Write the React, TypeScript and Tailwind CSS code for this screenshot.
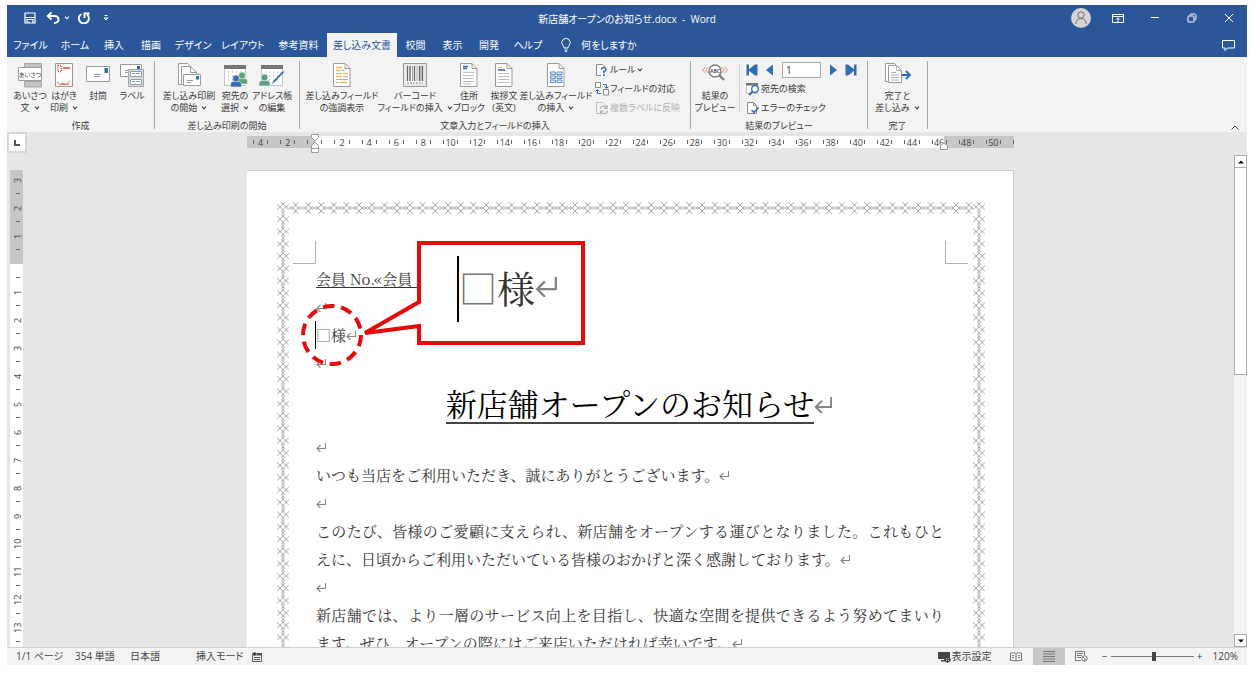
import type { ReactNode } from 'react';

const TABS = [
    { label: 'ファイル', width: 'w-[47px]' },
    { label: 'ホーム', width: 'w-[42px]' },
    { label: '挿入', width: 'w-[36px]' },
    { label: '描画', width: 'w-[38px]' },
    { label: 'デザイン', width: 'w-[46px]' },
    { label: 'レイアウト', width: 'w-[54px]' },
    { label: '参考資料', width: 'w-[57px]' },
    { label: '差し込み文書', width: 'w-[70px]', active: true },
    { label: '校閲', width: 'w-[37px]' },
    { label: '表示', width: 'w-[37px]' },
    { label: '開発', width: 'w-[36px]' },
    { label: 'ヘルプ', width: 'w-[42px]' },
];

const RULER = [4, 2, 0, ...Array.from({ length: 25 }, (_, i) => (i + 1) * 2)];
const SIDE_RULER = [3, 2, 1, 0, ...Array.from({ length: 13 }, (_, i) => i + 1)];

/* ---------- small glyphs ---------- */

function Caret() {
    return (
        <svg viewBox="0 0 6 4" className="inline-block h-1 w-1.5 shrink-0" aria-hidden="true">
            <path d="M1 .6 3 2.8 5 .6" fill="none" stroke="currentColor" strokeWidth="1.1" />
        </svg>
    );
}

function ReturnMark({ className = 'w-[10px]' }: { className?: string }) {
    return (
        <svg viewBox="0 0 20 18" className={`inline-block shrink-0 align-[1px] ${className}`} aria-hidden="true">
            <path
                d="M19 0v11H2M9 4 2 11l7 7"
                fill="none"
                stroke="#858585"
                strokeWidth="2.200"
            />
        </svg>
    );
}

/* ---------- ribbon icons ---------- */

function Icon({ children }: { children: ReactNode }) {
    return (
        <svg viewBox="0 0 26 25" className="h-[25px] w-[26px] shrink-0" fill="none" aria-hidden="true">
            {children}
        </svg>
    );
}

function Sheet({ x = 4.5 }: { x?: number }) {
    return (
        <g transform={`translate(${x} .5)`} stroke="#9a9a9a">
            <path d="M0 0h11.500l5 5v18H0z" fill="#fff" />
            <path d="M11.500 0v5h5" />
        </g>
    );
}

function Person({ x, y, color }: { x: number; y: number; color: string }) {
    return (
        <g transform={`translate(${x} ${y})`} fill={color} stroke="#f3f3f3" strokeWidth=".6">
            <path d="M0 12V9.500Q0 6.500 3 6.500h5q3 0 3 3V12z" />
            <circle cx="5.500" cy="3.500" r="3.400" />
        </g>
    );
}

function Grid() {
    return (
        <>
            <path d="M2.500 2.500h21v20h-21z" fill="#fff" stroke="#c4c4c4" />
            <path d="M2 2h22v4H2z" fill="#767676" />
            <path d="M6 9h16M6 13h16M6 17h16" stroke="#9a9a9a" strokeDasharray="1 3" />
        </>
    );
}

const icons = {
    greeting: (
        <Icon>
            <path d="M7.500.5h17v4h-17zM7.500 18.500h17v5.500h-17z" fill="#c4c4c4" stroke="#a6a6a6" />
            <path d="M1.500 4.500h23v13h-23z" fill="#fff" stroke="#9a9a9a" />
            <text x="13" y="13.500" textAnchor="middle" fontSize="6" fill="#444">
                あいさつ
            </text>
        </Icon>
    ),
    postcard: (
        <Icon>
            <path d="M4.500.5h17v23h-17z" fill="#fff" stroke="#9a9a9a" />
            <path d="M7 2.500h3.500v6H7z" stroke="#d9523f" strokeWidth="1.500" strokeDasharray="1 1" />
            <path d="M12 5h7" stroke="#d9523f" strokeWidth="1.600" />
            <path d="M6 18.500q1 3 2.500 1.500M10 20.500h4M15 20.500q2 0 4.500-2.500M8 21.500h10" stroke="#e27a6b" />
        </Icon>
    ),
    envelope: (
        <Icon>
            <path d="M1.500 3.500h23v15h-23z" fill="#fff" stroke="#9a9a9a" />
            <path d="M19.500 5H23v5h-3.500z" fill="#2f6db5" />
            <path d="M9 11.500h7M9 13.500h6" stroke="#9a9a9a" />
        </Icon>
    ),
    labels: (
        <Icon>
            <path d="M1.500 1.500h21v12h-21z" fill="#fff" stroke="#9a9a9a" />
            <path d="M18 3h3v3h-3z" fill="#2f6db5" />
            <path d="M6 7.500h4M6 9.500h3" stroke="#9a9a9a" />
            <path d="M9.500 6.500h15v17h-15z" fill="#dcdcdc" stroke="#a6a6a6" />
            <path d="M11.500 8.500h11v5h-11zM11.500 16.500h11v5h-11z" fill="#fff" stroke="#9a9a9a" />
            <path d="M13 10.500h3m1 0h4M13 18.500h3m1 0h4" stroke="#6f9dd0" />
        </Icon>
    ),
    startMerge: (
        <Icon>
            <path d="M2.500.5h9l5 5v16h-14z" fill="#fff" stroke="#9a9a9a" />
            <path d="M5.500 3.500h9l6 6v12h-15z" fill="#fff" stroke="#9a9a9a" />
            <path d="M14.500 3.500v6h6" stroke="#9a9a9a" />
            <path d="M7.500 11.500h17v11h-17z" fill="#fff" stroke="#9a9a9a" />
            <path d="M20 13h3v3.500h-3z" fill="#2f6db5" />
            <path d="M11 17.500h6M11 19.500h4" stroke="#9a9a9a" />
        </Icon>
    ),
    recipients: (
        <Icon>
            <Grid />
            <Person x={14.5} y={9} color="#5f9e7e" />
            <Person x={8.5} y={12} color="#2f6db5" />
        </Icon>
    ),
    editList: (
        <Icon>
            <Grid />
            <Person x={0} y={11} color="#5f9e7e" />
            <path d="m13 21.500 1-3.500 9-9.500q1.500-1 2.500.5L16 19z" fill="#2f6db5" stroke="#f3f3f3" strokeWidth=".5" />
        </Icon>
    ),
    highlight: (
        <Icon>
            <Sheet />
            <path d="M7 4.500h6M7 7.500h4M14 10.500h5M7 13.500h6M11 19.500h7" stroke="#eebf49" strokeWidth="1.400" />
            <path d="M12 7.500h3M7 10.500h6M14 13.500h5M7 16.500h12M7 19.500h3" stroke="#b0b0b0" />
        </Icon>
    ),
    barcode: (
        <Icon>
            <path d="M1.500.5h23v23h-23z" fill="#e9e9e9" stroke="#9a9a9a" />
            <path d="M4 3h18v18H4z" fill="#fff" />
            <path
                d="M5.500 3v15M8 3v15M12.500 3v15M17.500 3v15M20.500 3v15"
                stroke="#666"
                strokeWidth="1.400"
            />
            <path d="M10.500 3v15M15 3v15M19 3v15" stroke="#888" strokeWidth=".8" />
            <path d="M5 20h16" stroke="#777" strokeDasharray="2 1" />
        </Icon>
    ),
    address: (
        <Icon>
            <Sheet />
            <path d="M7 3.500h5M7 5.500h4" stroke="#2f6db5" strokeWidth="1.300" />
            <path d="M7 9.500h11M7 12.500h11M7 15.500h11M7 18.500h11M7 21h8" stroke="#bdbdbd" />
        </Icon>
    ),
    greetingLine: (
        <Icon>
            <Sheet />
            <path d="M7 7h7" stroke="#2f6db5" strokeWidth="1.600" />
            <path d="M7 4.500h4M7 10.500h11M7 13.500h11M7 16.500h11M7 19.500h11" stroke="#bdbdbd" />
        </Icon>
    ),
    insertField: (
        <Icon>
            <Sheet />
            <path
                d="M7.500 9h5v2.500h-5zM14 9h5v2.500h-5zM7.500 13h5v2.500h-5zM14 13h5v2.500h-5zM7.500 17h5v2.500h-5zM14 17h5v2.500h-5z"
                fill="#e4eef8"
                stroke="#5b90c9"
            />
        </Icon>
    ),
    preview: (
        <Icon>
            <path d="m3.500 4-3 3 3 3M6.500 4l-3 3 3 3M22.500 4l3 3-3 3M19.500 4l3 3-3 3" stroke="#e08476" />
            <path d="m17 12 5 5" stroke="#7d7d7d" strokeWidth="2.400" />
            <circle cx="13" cy="8" r="6" fill="#fff" stroke="#7d7d7d" strokeWidth="1.300" />
            <text x="13" y="10" textAnchor="middle" fontSize="5" fontWeight="700" fill="#555">
                ABC
            </text>
        </Icon>
    ),
    finish: (
        <Icon>
            <path d="M.5.5h9l5 5v13H.5z" fill="#fff" stroke="#9a9a9a" />
            <path d="M3.500 2.500h8l5 5v12h-13z" fill="#fff" stroke="#9a9a9a" />
            <path d="M11.500 2.500v5h5M6 9.500h5M6 12h8M6 14.500h8M6 17h8" stroke="#b0b0b0" />
            <path d="M17 12h8M21 8l4 4-4 4" stroke="#2f6db5" strokeWidth="1.900" />
        </Icon>
    ),
};

function SmallIcon({ children }: { children: ReactNode }) {
    return (
        <svg viewBox="0 0 14 14" className="size-[14px] shrink-0" fill="none" aria-hidden="true">
            {children}
        </svg>
    );
}

const smallIcons = {
    rules: (
        <SmallIcon>
            <path d="M6 12.500H1.500v-11h6l3 3" fill="#fff" stroke="#8a8a8a" />
            <path
                d="M6.500 6.500q.3-2 2.300-2t2.200 1.800Q11 8 8.800 8.500v1.800M8.800 11.300v1.700"
                stroke="#2f6db5"
                strokeWidth="1.600"
            />
        </SmallIcon>
    ),
    match: (
        <SmallIcon>
            <path d="M.5.5h5v5h-5zM8.500 7.500h5v5.500h-5z" fill="#fff" stroke="#8a8a8a" />
            <path d="M8 2.500h3.500V6M9.500 4.500l2 2 2-2M6 11.500H2.500V8M.5 9.500l2-2 2 2" stroke="#2f6db5" />
        </SmallIcon>
    ),
    update: (
        <SmallIcon>
            <path d="M5 12.500H1.500v-11h6l3 3" stroke="#bdbdbd" />
            <path
                d="M5 8a3.500 3.500 0 0 1 6.500-1M12 4v3.500H8.500M12.500 9.500A3.500 3.500 0 0 1 6 11M5.500 13.500V10H9"
                stroke="#b0b0b0"
                strokeWidth="1.200"
            />
        </SmallIcon>
    ),
    find: (
        <SmallIcon>
            <path d="M.5 2.500h11v9H.5z" fill="#fff" stroke="#c4c4c4" />
            <path d="M0 1h12v2.500H0z" fill="#767676" />
            <path d="M6.500 9.500 3 13" stroke="#2f6db5" strokeWidth="2" />
            <circle cx="9" cy="7" r="3.300" fill="#fff" stroke="#2f6db5" strokeWidth="1.300" />
        </SmallIcon>
    ),
    check: (
        <SmallIcon>
            <path d="M1.500 1.500h6l3 3v8h-9z" fill="#fff" stroke="#8a8a8a" />
            <path d="M7.500 1.500v3h3" stroke="#8a8a8a" />
            <path d="M5.500 9 8 11.500l4.500-5" stroke="#2f6db5" strokeWidth="1.600" />
        </SmallIcon>
    ),
};

/* ---------- ribbon parts ---------- */

type BigButtonProps = {
    icon: ReactNode;
    lines: string[];
    menu?: boolean;
    width: string;
};

function BigButton({ icon, lines, menu, width }: BigButtonProps) {
    return (
        <button className={`flex shrink-0 flex-col items-center gap-0.5 pt-[3px] ${width}`}>
            {icon}
            <span className="flex flex-col items-center whitespace-nowrap leading-3">
                {lines.map((line, i) => (
                    <span key={line} className="flex items-center gap-1">
                        {line}
                        {menu && i === lines.length - 1 && <Caret />}
                    </span>
                ))}
            </span>
        </button>
    );
}

function SmallButton({
    icon,
    label,
    menu,
    disabled,
}: {
    icon: ReactNode;
    label: string;
    menu?: boolean;
    disabled?: boolean;
}) {
    return (
        <button
            disabled={disabled}
            className="flex h-[19px] items-center gap-px whitespace-nowrap disabled:text-[#b1b1b1]"
        >
            {icon}
            {label}
            {menu && <Caret />}
        </button>
    );
}

function Group({ label, width, children }: { label: string; width: string; children: ReactNode }) {
    return (
        <section aria-label={label} className={`flex shrink-0 ${width}`}>
            <div className="flex grow flex-col items-center justify-between pt-[3px]">
                <div className="flex w-full items-start">{children}</div>
                <div className="whitespace-nowrap leading-3">{label}</div>
            </div>
            <div className="mt-1 mb-[3px] w-px bg-[#a9a9a9]" />
        </section>
    );
}

function NavButton({ label, path, flip }: { label: string; path: string; flip?: boolean }) {
    return (
        <button aria-label={label}>
            <svg viewBox="0 0 12 12" className={`size-3 ${flip ? '-scale-x-100' : ''}`} fill="#2f6db5">
                <path d={path} />
            </svg>
        </button>
    );
}

const PREV = 'M9 .5v11L2 6z';
const FIRST = 'M.5.5H3v4.800L9 .5V.500h2.500v11H9L3 6.700v4.800H.5z';

function Ribbon() {
    return (
        <div className="flex h-[75px] shrink-0 bg-[#f3f3f3] text-[9px] text-[#3b3b3b]">
            <Group label="作成" width="w-[148px]">
                <div className="flex pl-[6px]">
                    <BigButton icon={icons.greeting} lines={['あいさつ', '文']} menu width="w-[34px]" />
                    <BigButton icon={icons.postcard} lines={['はがき', '印刷']} menu width="w-[34px]" />
                    <BigButton icon={icons.envelope} lines={['封筒']} width="w-[34px]" />
                    <BigButton icon={icons.labels} lines={['ラベル']} width="w-[34px]" />
                </div>
            </Group>
            <Group label="差し込み印刷の開始" width="w-[145px]">
                <div className="flex pl-[5px]">
                    <BigButton icon={icons.startMerge} lines={['差し込み印刷', 'の開始']} menu width="w-[58px]" />
                    <BigButton icon={icons.recipients} lines={['宛先の', '選択']} menu width="w-[34px]" />
                    <BigButton icon={icons.editList} lines={['アドレス帳', 'の編集']} width="w-[40px]" />
                </div>
            </Group>
            <Group label="文章入力とフィールドの挿入" width="w-[391px]">
                <div className="flex pl-1">
                    <BigButton icon={icons.highlight} lines={['差し込みフィールド', 'の強調表示']} width="w-[76px]" />
                    <BigButton icon={icons.barcode} lines={['バーコード', 'フィールドの挿入']} menu width="w-[70px]" />
                    <BigButton icon={icons.address} lines={['住所', 'ブロック']} width="w-[38px]" />
                    <BigButton icon={icons.greetingLine} lines={['挨拶文', '(英文)']} width="w-[32px]" />
                    <BigButton icon={icons.insertField} lines={['差し込みフィールド', 'の挿入']} menu width="w-[72px]" />
                    <div className="flex flex-col pl-[3px]">
                        <SmallButton icon={smallIcons.rules} label="ルール" menu />
                        <SmallButton icon={smallIcons.match} label="フィールドの対応" />
                        <SmallButton icon={smallIcons.update} label="複数ラベルに反映" disabled />
                    </div>
                </div>
            </Group>
            <Group label="結果のプレビュー" width="w-[177px]">
                <BigButton icon={icons.preview} lines={['結果の', 'プレビュー']} width="w-[48px]" />
                <div className="my-1 w-px self-stretch bg-[#d2d2d2]" />
                <div className="flex flex-col pl-[6px]">
                    <div className="flex h-[19px] items-center gap-[6px]">
                        <NavButton label="先頭のレコード" path={FIRST} />
                        <NavButton label="前のレコード" path={PREV} />
                        <input
                            aria-label="レコード"
                            defaultValue="1"
                            className="h-4 w-[39px] border border-[#a9a9a9] bg-white px-[3px] text-[10px] outline-none"
                        />
                        <NavButton label="次のレコード" path={PREV} flip />
                        <NavButton label="最後のレコード" path={FIRST} flip />
                    </div>
                    <SmallButton icon={smallIcons.find} label="宛先の検索" />
                    <SmallButton icon={smallIcons.check} label="エラーのチェック" />
                </div>
            </Group>
            <Group label="完了" width="w-[60px]">
                <BigButton icon={icons.finish} lines={['完了と', '差し込み']} menu width="w-full" />
            </Group>
            <button aria-label="リボンを折りたたむ" className="mr-1 ml-auto self-end px-1 py-0.5">
                <svg viewBox="0 0 8 5" className="h-[5px] w-2" fill="none" stroke="#444">
                    <path d="M.5 4.500 4 1l3.500 3.500" />
                </svg>
            </button>
        </div>
    );
}

/* ---------- title bar ---------- */

function WindowButton({ label, children }: { label: string; children: ReactNode }) {
    return (
        <button aria-label={label} className="flex w-[37px] items-center justify-center pb-0.5">
            <svg viewBox="0 0 12 12" className="size-3" fill="none" stroke="#fff" aria-hidden="true">
                {children}
            </svg>
        </button>
    );
}

function TitleBar() {
    return (
        <header className="grid h-7 shrink-0 grid-cols-[1fr_auto_1fr]">
            <div className="flex items-center pb-0.5 pl-[17px]">
                <button aria-label="上書き保存" className="mr-[10px]">
                    <svg viewBox="0 0 12 12" className="size-3" fill="none" stroke="#fff" strokeWidth="1.200">
                        <path d="M1 1h10v10H1zM3 11V7.500h6V11M1 5.500h10M5 9.500V11" />
                    </svg>
                </button>
                <button aria-label="元に戻す" className="flex items-center gap-1">
                    <svg viewBox="0 0 14 12" className="h-3 w-3.5" fill="none" stroke="#fff" strokeWidth="1.900">
                        <path d="M5.500.5 1.700 4l3.800 3.500M2 4h6.500q4 0 4 3.500T8 11" />
                    </svg>
                    <Caret />
                </button>
                <button aria-label="繰り返し" className="ml-2">
                    <svg viewBox="0 0 12 12" className="size-3" fill="none" stroke="#fff" strokeWidth="1.900">
                        <path d="M3.500 2A5 5 0 1 0 9 2.500M6.500 6V1.500h5" />
                    </svg>
                </button>
                <button aria-label="クイック アクセス ツール バーのカスタマイズ" className="ml-[13px]">
                    <svg viewBox="0 0 6 6" className="size-1.5" fill="none" stroke="#fff">
                        <path d="M1.500.5h3M1 3h4L3 5z" />
                    </svg>
                </button>
            </div>
            <h1 className="self-center whitespace-pre">新店舗オープンのお知らせ.docx  -  Word</h1>
            <div className="flex justify-end">
                <button aria-label="アカウント" className="flex w-[37px] items-center justify-center pb-0.5">
                    <svg viewBox="0 0 20 20" className="size-5" fill="none" stroke="#707070">
                        <circle cx="10" cy="10" r="10" fill="#d4d4d4" stroke="none" />
                        <circle cx="10" cy="7" r="3.200" />
                        <path d="M5 16q0-5.500 5-5.500t5 5.500" />
                    </svg>
                </button>
                <WindowButton label="リボンの表示オプション">
                    <path d="M.5 2.500h11v8H.5zM.5 4.500h11M6 10V6M4.300 7.500 6 5.800l1.700 1.700" />
                </WindowButton>
                <WindowButton label="最小化">
                    <path d="M2 5.500h8" />
                </WindowButton>
                <WindowButton label="元に戻す (縮小)">
                    <path d="M2 4.500q0-.5.500-.5h5q.5 0 .5.500v5q0 .5-.5.500h-5Q2 10 2 9.500zM4 3.500q0-1.500 1-1.500h3.500Q10 2 10 3.500V7q0 1-1.500 1" />
                </WindowButton>
                <WindowButton label="閉じる">
                    <path d="m2 2 8 8M10 2l-8 8" />
                </WindowButton>
            </div>
        </header>
    );
}

function TabRow() {
    return (
        <nav className="flex h-6 shrink-0">
            {TABS.map((tab) => (
                <button
                    key={tab.label}
                    className={`whitespace-nowrap text-center ${tab.width} ${
                        tab.active ? 'bg-[#f3f3f3] text-[#2b579a]' : ''
                    }`}
                >
                    {tab.label}
                </button>
            ))}
            <button className="ml-3 flex items-center gap-2.5 whitespace-nowrap">
                <svg viewBox="0 0 10 14" className="h-3.5 w-2.5" fill="none" stroke="#fff">
                    <path d="M3 10Q3 8.500 2 7.500A4.200 4.200 0 1 1 8 7.500Q7 8.500 7 10zM3.500 12h3M4 13.500h2" />
                </svg>
                何をしますか
            </button>
            <button aria-label="コメント" className="mr-3 ml-auto">
                <svg viewBox="0 0 13 12" className="h-3 w-[13px]" fill="none" stroke="#fff">
                    <path d="M.5 1.500h12v7.500H5.500L3 11.500V9H.5z" />
                </svg>
            </button>
        </nav>
    );
}

/* ---------- document ---------- */

function HorizontalRuler() {
    return (
        <div className="flex h-[21px] shrink-0 text-[9px] leading-none text-[#444]">
            <div className="flex w-5 items-center justify-center border-2 border-[#d6d6d6] bg-white">
                <svg viewBox="0 0 6 6" className="size-1.5" fill="none" stroke="#555" strokeWidth="2">
                    <path d="M1 0v5h5" />
                </svg>
            </div>
            <div className="relative mx-auto mt-1 flex h-3 w-[767px] bg-[linear-gradient(to_right,#c6c6c6_68px,#fff_68px,#fff_697px,#c6c6c6_697px)]">
                {RULER.map((n, i) => (
                    <div key={i} className="flex flex-1 items-center justify-between px-[6px]">
                        <span className="h-1 w-px bg-[#666]" />
                        {n > 0 && <span>{n}</span>}
                        <span className="h-1 w-px bg-[#666]" />
                    </div>
                ))}
                <div className="flex w-[7px] items-center justify-end">
                    <span className="h-1 w-px bg-[#666]" />
                </div>
                <svg viewBox="0 0 8 20" className="absolute -top-0.5 left-[64px] h-5 w-2" fill="#fff" stroke="#9a9a9a">
                    <path d="M.5.5h7v3L4 7 .5 3.500zM.5 14.500v-3L4 8l3.500 3.500v3zM.5 14.500h7v4h-7z" />
                </svg>
                <svg viewBox="0 0 8 8" className="absolute top-1.5 left-[693px] size-2" fill="#fff" stroke="#9a9a9a">
                    <path d="M.5 7.500v-3L4 1l3.500 3.500v3z" />
                </svg>
            </div>
            <div className="w-[13px]" />
        </div>
    );
}

function VerticalRuler() {
    return (
        <div className="w-5 shrink-0 overflow-hidden pt-[17px] pl-[3px]">
            <div className="w-[13px] bg-[linear-gradient(to_bottom,#c6c6c6_94px,#fff_94px)] pt-[3px] pl-0.5 text-[9px] leading-none text-[#444]">
                {SIDE_RULER.map((n, i) => (
                    <div key={i} className="flex h-7 flex-col items-center">
                        <span className="flex h-3.5 rotate-180 items-center justify-center [writing-mode:vertical-rl]">
                            {n > 0 && n}
                        </span>
                        <span className="my-[6px] h-px w-1 bg-[#666]" />
                    </div>
                ))}
            </div>
        </div>
    );
}

// woven cord border running round the sheet, plus the margin corner marks
function PageBorder() {
    return (
        <svg className="absolute inset-0 size-full" fill="none" aria-hidden="true">
            <defs>
                <path
                    id="knot"
                    d="M0 3l7.500 7.500L6 12 4.500 10.500 12 3M0 9l7.500-7.500L6 0 4.500 1.500 12 9"
                    stroke="#7d7d7d"
                    strokeWidth=".7"
                />
                <pattern id="cord-v" x="30" y="30" width="12" height="12.300" patternUnits="userSpaceOnUse">
                    <use href="#knot" />
                </pattern>
                <pattern id="cord-v2" x="726" y="30" width="12" height="12.300" patternUnits="userSpaceOnUse">
                    <use href="#knot" />
                </pattern>
                <pattern id="cord-h" x="30" y="31" width="12.700" height="12" patternUnits="userSpaceOnUse">
                    <use href="#knot" transform="rotate(-90 6 6)" />
                </pattern>
            </defs>
            <rect x="30" y="31" width="12" height="100%" fill="url(#cord-v)" />
            <rect x="726" y="31" width="12" height="100%" fill="url(#cord-v2)" />
            <rect x="42" y="31" width="684" height="12" fill="url(#cord-h)" />
            <path d="M46 92.500h22.500V70M721 92.500h-22.500V70" stroke="#b0b0b0" />
        </svg>
    );
}

function Callout() {
    return (
        <>
            <svg
                viewBox="0 0 290 130"
                className="absolute top-[68px] left-[50px] h-[130px] w-[290px]"
                fill="none"
                stroke="#e60a0a"
                strokeWidth="4"
                aria-hidden="true"
            >
                <path d="M122 4h164v100H122V87L68 94l54-31z" fill="#fff" />
                <circle cx="35" cy="96" r="29" strokeDasharray="11.500 6.700" />
            </svg>
            <div className="absolute top-[85px] left-[210px] flex h-[66px] items-center border-l-2 border-black pb-1 text-[38px] leading-none font-normal">
                <span className="text-[#777]">□</span>様
                <ReturnMark className="w-[22px]" />
            </div>
        </>
    );
}

function Line({ children }: { children?: ReactNode }) {
    return (
        <p className="min-h-7 text-justify">
            {children}
            <ReturnMark />
        </p>
    );
}

function Page() {
    return (
        <article className="relative mx-auto mt-[17px] w-[767px] shrink-0 border-t border-r border-[#cfcfcf] bg-white px-[69px] pt-[94px] pb-24 font-['Noto_Serif_CJK_JP','Liberation_Serif','Noto_Sans_CJK_JP',serif] text-[15px] leading-7 text-[#333] [font-feature-settings:normal]">
            <PageBorder />
            <div className="relative">
                <p className="h-7">
                    <span className="inline-block h-[23px] w-28 border-b border-[#333] align-top">会員 No.«会員</span>
                </p>
                <Line />
                <p className="flex h-7 items-center">
                    <span className="-ml-px h-full w-px bg-black" />
                    <span className="text-[#777]">□</span>様
                    <ReturnMark />
                </p>
                <Line />
                <h2 className="flex h-14 items-center justify-center text-[31px] leading-none text-black">
                    <span className="border-b-2 border-[#444] pb-1">新店舗オープンのお知らせ</span>
                    <ReturnMark className="-mr-[18px] w-[18px]" />
                </h2>
                <Line />
                <Line>いつも当店をご利用いただき、誠にありがとうございます。</Line>
                <Line />
                <Line>
                    このたび、皆様のご愛顧に支えられ、新店舗をオープンする運びとなりました。これもひとえに、日頃からご利用いただいている皆様のおかげと深く感謝しております。
                </Line>
                <Line />
                <Line>
                    新店舗では、より一層のサービス向上を目指し、快適な空間を提供できるよう努めてまいります。ぜひ、オープンの際にはご来店いただければ幸いです。
                </Line>
            </div>
            <Callout />
        </article>
    );
}

function ScrollBar() {
    return (
        <div className="mt-0.5 flex w-[13px] shrink-0 flex-col bg-[#f3f3f3]">
            <button
                aria-label="上へスクロール"
                className="flex h-[13px] items-center justify-center border border-[#ababab] bg-white"
            >
                <svg viewBox="0 0 6 4" className="h-1 w-1.5">
                    <path d="M0 3.500 3 .5l3 3z" />
                </svg>
            </button>
            <div className="h-[42%] border border-t-0 border-[#ababab] bg-white" />
            <button
                aria-label="下へスクロール"
                className="mt-auto flex h-[13px] items-center justify-center border border-[#ababab] bg-white"
            >
                <svg viewBox="0 0 6 4" className="h-1 w-1.5">
                    <path d="M0 .5h6l-3 3z" />
                </svg>
            </button>
        </div>
    );
}

function StatusBar() {
    return (
        <footer className="flex h-[18px] shrink-0 items-center border-t border-[#cfcfcf] bg-[#f3f3f3] text-[10px] whitespace-nowrap text-[#444]">
            <span className="w-[68px] pl-[9px]">1/1 ページ</span>
            <span className="w-[55px]">354 単語</span>
            <span className="w-[66px]">日本語</span>
            <button className="w-14 text-left">挿入モード</button>
            <button aria-label="マクロの記録">
                <svg viewBox="0 0 10 10" className="size-2.5" fill="none" stroke="#555">
                    <path d="M.5 2.500h9v7h-9zM2 5.500h6M2 7.500h6" />
                    <path d="M0 1h10v2.500H0z" fill="#555" stroke="none" />
                    <circle cx="2.500" cy="2" r="2" fill="#333" stroke="#f3f3f3" strokeWidth=".5" />
                </svg>
            </button>
            <button className="mr-[18px] ml-auto flex items-center gap-px">
                <svg viewBox="0 0 13 12" className="h-3 w-[13px]">
                    <path d="M0 1h12v7H0zM3 9h4v1.500H3z" fill="#444" />
                    <circle cx="9.500" cy="8.500" r="2.300" fill="#f3f3f3" stroke="#444" strokeWidth="1.400" />
                    <path d="M9.500 5v7M6 8.500h7" stroke="#444" strokeWidth=".8" />
                </svg>
                表示設定
            </button>
            <button aria-label="閲覧モード" className="mr-[11px]">
                <svg viewBox="0 0 12 10" className="h-2.5 w-3" fill="none" stroke="#777">
                    <path d="M6 1.500Q3.500.5.5 1v7.500Q3.500 8 6 9q2.500-1 5.500-.5V1Q8.500.5 6 1.500zM6 1.500V9M2 3.500h2M2 5.500h2M8 3.500h2M8 5.500h2" />
                </svg>
            </button>
            <button aria-label="印刷レイアウト" className="flex h-full w-8 items-center justify-center bg-[#c6c6c6]">
                <svg viewBox="0 0 12 11" className="h-[11px] w-3" fill="none" stroke="#777">
                    <path d="M0 .5h12M0 3h12M0 5.500h12M0 8h12M0 10.500h12" />
                </svg>
            </button>
            <button aria-label="Web レイアウト" className="mr-3 ml-[10px]">
                <svg viewBox="0 0 13 11" className="h-[11px] w-[13px]" fill="none" stroke="#777">
                    <path d="M6 9.500H.5v-9h9V4M2 2.500h6M2 4.500h5M2 6.500h4" />
                    <circle cx="9.500" cy="7.500" r="2.700" fill="#f3f3f3" />
                    <path d="M8 6l2 2v2" />
                </svg>
            </button>
            <button aria-label="縮小" className="w-2.5">
                −
            </button>
            <input
                type="range"
                aria-label="ズーム"
                min={0}
                max={100}
                defaultValue={52}
                className="mx-px h-3 w-[83px] appearance-none bg-[linear-gradient(#777,#777)] bg-[length:100%_1px] bg-center bg-no-repeat [&::-webkit-slider-thumb]:h-[9px] [&::-webkit-slider-thumb]:w-1 [&::-webkit-slider-thumb]:appearance-none [&::-webkit-slider-thumb]:bg-[#444]"
            />
            <button aria-label="拡大" className="w-2.5">
                +
            </button>
            <button className="mr-[9px] ml-2">120%</button>
        </footer>
    );
}

export default function App() {
    return (
        <div
            lang="ja"
            className="flex h-screen flex-col bg-white pt-[5px] pr-[9px] pb-[9px] pl-[7px] font-['Open_Sans','Noto_Sans_CJK_JP',sans-serif] text-[10px] [font-feature-settings:'palt']"
        >
            <div className="shrink-0 bg-[#2b579a] text-white">
                <TitleBar />
                <TabRow />
            </div>
            <Ribbon />
            <main className="flex min-h-0 flex-1 flex-col bg-[#e6e6e6]">
                <HorizontalRuler />
                <div className="flex min-h-0 flex-1">
                    <VerticalRuler />
                    <div className="flex min-w-0 flex-1 items-start overflow-hidden">
                        <Page />
                    </div>
                    <ScrollBar />
                </div>
            </main>
            <StatusBar />
        </div>
    );
}
